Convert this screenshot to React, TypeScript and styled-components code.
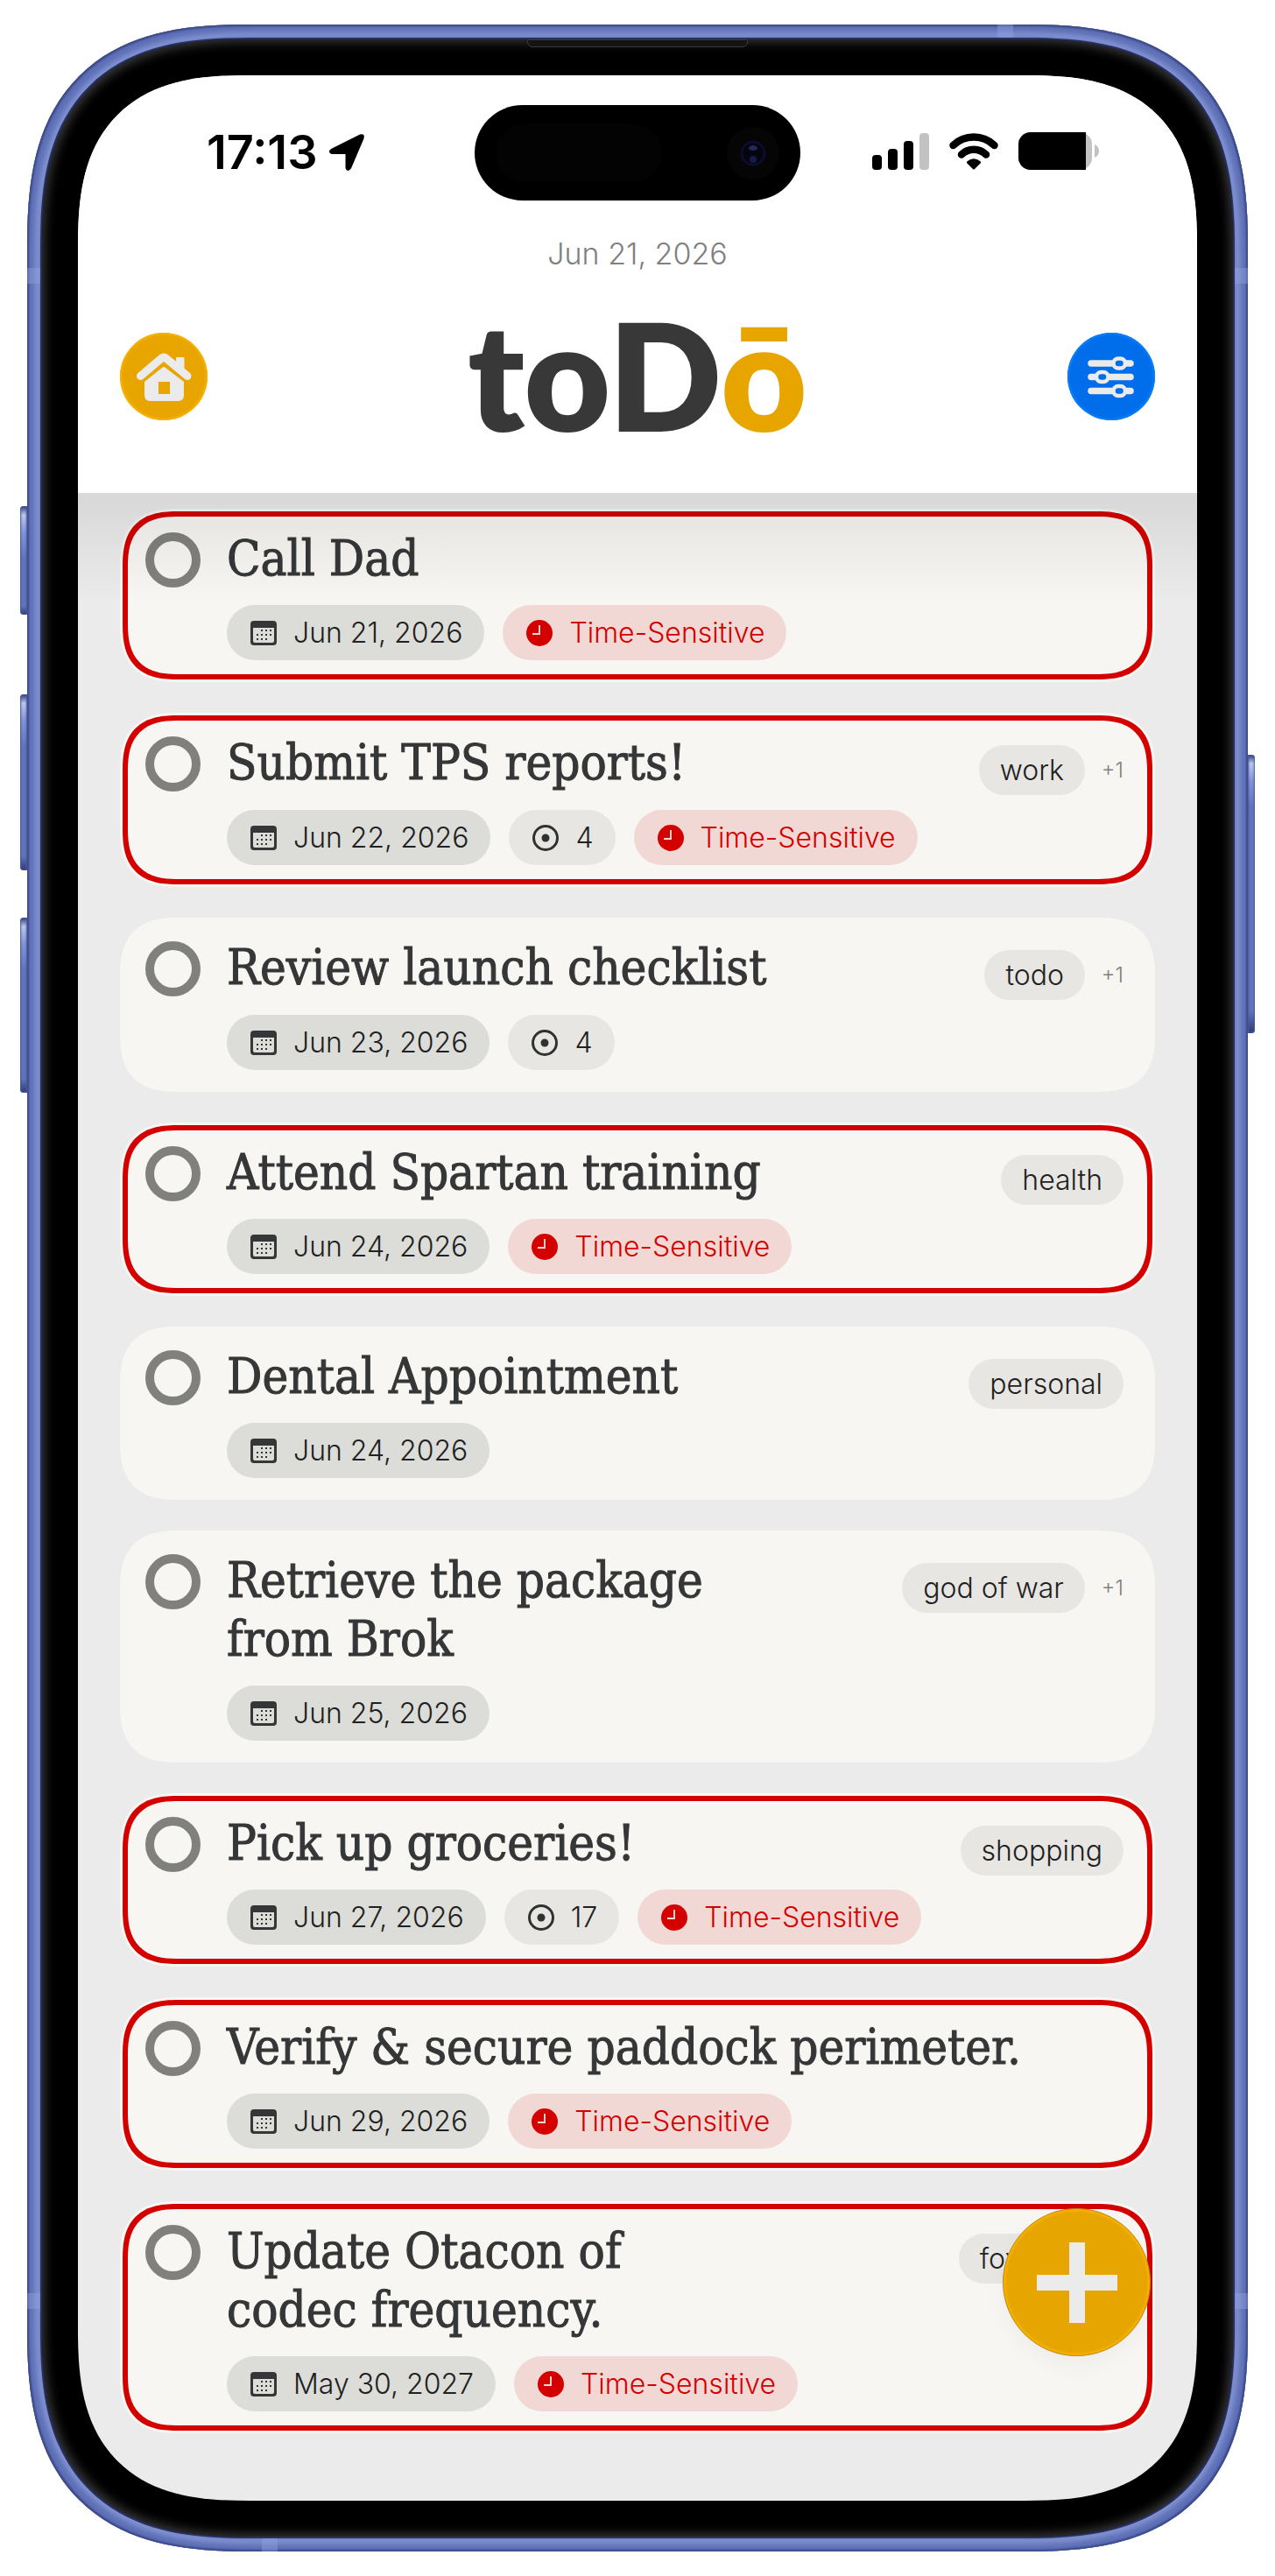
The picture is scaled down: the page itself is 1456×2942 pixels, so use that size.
import React from "react";
import styled, { createGlobalStyle, css } from "styled-components";

const BODY_FONT = `Inter, "Noto Sans", "Liberation Sans", sans-serif`;
const TITLE_FONT = `"DejaVu Serif Condensed", "DejaVu Serif", "Liberation Serif", serif`;
const LOGO_FONT = `Lato, "Open Sans", "Liberation Sans", sans-serif`;

const GlobalStyle = createGlobalStyle`
  *, *::before, *::after { box-sizing: border-box; }
  body { margin: 0; background: #ffffff; font-family: ${BODY_FONT}; color: #1f2122; }
`;

const smooth = (plain: number, wide: number) => css`
  border-radius: ${plain}px;
  @supports (corner-shape: squircle) {
    border-radius: ${wide}px;
    corner-shape: superellipse(1.4);
  }
`;

const Page = styled.div`
  padding: 28px 31px 29px;
`;

const Phone = styled.div`
  position: relative;
  padding: 17px;
  ${smooth(225, 256)}
  background: #5b6db8;
  box-shadow:
    inset 0 0 2px 2px #3d4a86,
    inset 0 0 6px 9px #5d6fb6,
    inset 0 0 5px 15px #8797d4;
`;

const Bezel = styled.div`
  position: relative;
  padding: 41px;
  ${smooth(208, 240)}
  background: #000000;
  box-shadow:
    0 0 0 2px #27305c,
    inset 0 0 12px 3px #383838;
`;

const Screen = styled.div`
  position: relative;
  overflow: hidden;
  ${smooth(166, 196)}
  background: #ebebeb;
`;

const SideButton = styled.span<{ $side: "left" | "right"; $top: number; $length: number }>`
  position: absolute;
  top: ${(p) => p.$top}px;
  ${(p) => p.$side}: -8px;
  width: 8px;
  height: ${(p) => p.$length}px;
  border-radius: ${(p) => (p.$side === "left" ? "4px 0 0 4px" : "0 4px 4px 0")};
  background: linear-gradient(#2f3a70, #b9c7f0 10px, #8494d6 30px, #6174bb 60px, #6174bb 92%, #2f3a70);
  box-shadow: inset 0 0 2px 1px #4a5a9e;
`;

const Antenna = styled.span<{ $edge: "left" | "right" | "top" | "bottom"; $at: string }>`
  position: absolute;
  background: rgba(150, 166, 228, 0.4);
  ${(p) => {
    const [side, offset] = p.$at.split(" ");
    const vertical = p.$edge === "left" || p.$edge === "right";
    return css`
      ${p.$edge}: 0;
      ${side}: ${offset};
      width: ${vertical ? 15 : 18}px;
      height: ${vertical ? 18 : 15}px;
    `;
  }}
`;

const Earpiece = styled.span`
  position: absolute;
  top: 0;
  left: 50%;
  width: 252px;
  height: 9px;
  transform: translateX(-50%);
  border: 1px solid #3a3a3a;
  border-radius: 0 0 6px 6px;
  background: #141414;
`;

const Header = styled.header`
  padding: 34px 48px 73px;
  background: #ffffff;
`;

const StatusBar = styled.div`
  display: grid;
  grid-template-columns: 1fr 372px 1fr;
  align-items: center;
  margin: 0 -48px;
`;

const Clock = styled.div`
  display: flex;
  align-items: center;
  gap: 12px;
  padding: 0 0 2px 147px;
  color: #000000;
  font-size: 54px;
  font-weight: 600;
  line-height: 60px;
`;

const Island = styled.div`
  display: flex;
  align-items: center;
  justify-content: space-between;
  height: 109px;
  padding: 0 24px;
  border-radius: 55px;
  background: #000000;
`;

const Sensor = styled.span`
  width: 190px;
  height: 66px;
  border-radius: 33px;
  background: #030303;
`;

const Camera = styled.span`
  display: grid;
  place-items: center;
  width: 60px;
  height: 60px;
  border-radius: 50%;
  background: #050506;
`;

const Signals = styled.div`
  display: flex;
  align-items: center;
  gap: 23px;
  padding: 0 0 3px 82px;
`;

const Today = styled.time`
  display: block;
  margin-top: 41px;
  color: #808080;
  font-size: 34px;
  font-weight: 300;
  line-height: 40px;
  text-align: center;
`;

const Brand = styled.div`
  display: flex;
  align-items: center;
  justify-content: space-between;
  height: 120px;
  margin-top: 60px;
`;

const RoundButton = styled.button<{ $color: string; $rim: string }>`
  width: 100px;
  height: 100px;
  padding: 0;
  border: 0;
  border-radius: 50%;
  background: ${(p) => p.$color};
  box-shadow: inset 0 0 2px 2px ${(p) => p.$rim};
  cursor: pointer;

  svg { display: block; }
`;

const Logo = styled.h1`
  margin: 0;
  padding-bottom: 7px;
  color: #383838;
  font-family: ${LOGO_FONT};
  font-size: 170px;
  font-weight: 800;
  line-height: 120px;

  em { color: #e8a500; font-style: normal; }
`;

const TaskArea = styled.main`
  position: relative;
  padding: 18px 48px 77px;

  &::before {
    content: "";
    position: absolute;
    z-index: 1;
    inset: 0 0 auto;
    height: 124px;
    background: linear-gradient(rgba(0, 0, 0, 0.08), rgba(0, 0, 0, 0.07) 20px, rgba(0, 0, 0, 0));
    pointer-events: none;
  }
`;

const TaskList = styled.ul`
  display: flex;
  flex-direction: column;
  gap: 35px;
  margin: 0;
  padding: 0;
  list-style: none;
`;

const Card = styled.li<{ $urgent: boolean }>`
  position: relative;
  display: grid;
  grid-template-columns: 63px 1fr;
  column-gap: 30px;
  padding: 23px 36px 25px 29px;
  ${smooth(56, 68)}
  background: #f7f6f2;

  ${(p) =>
    p.$urgent &&
    css`
      &::after {
        content: "";
        position: absolute;
        inset: 3px;
        border: 6px solid #d40000;
        ${smooth(52, 64)}
        pointer-events: none;
      }
    `}
`;

const Tick = styled.input`
  appearance: none;
  width: 63px;
  height: 63px;
  margin: 4px 0 0;
  border: 10px solid #80807e;
  border-radius: 50%;
  cursor: pointer;

  &:checked { background: #80807e; }
`;

const TaskBody = styled.div`
  display: flex;
  flex-direction: column;
  gap: 20px;
`;

const TitleRow = styled.div<{ $more: boolean }>`
  display: flex;
  align-items: flex-start;
  justify-content: space-between;
  min-height: ${(p) => (p.$more ? 68 : 67)}px;
`;

const Title = styled.label`
  color: #353637;
  font-family: ${TITLE_FONT};
  font-size: 56px;
  line-height: 67px;
  -webkit-text-stroke: 1px #353637;
  white-space: pre-line;
`;

const Tags = styled.div`
  display: flex;
  align-items: center;
  gap: 19px;
  height: 57px;
  margin: 14px 0 -4px;
`;

const Tag = styled.span`
  padding: 0 24px;
  border-radius: 29px;
  background: #e7e6e3;
  font-size: 32px;
  font-weight: 300;
  line-height: 57px;
`;

const More = styled.span`
  color: #808080;
  font-size: 24px;
  font-weight: 300;
`;

const Pills = styled.div`
  display: flex;
  gap: 21px;
`;

const Pill = styled.span<{ $tone: "date" | "count" | "urgent" }>`
  display: flex;
  align-items: center;
  gap: 19px;
  height: 63px;
  padding: 0 25px 0 27px;
  border-radius: 32px;
  background: ${(p) => ({ date: "#dcddd8", count: "#e7e6e3", urgent: "#f2d8d5" })[p.$tone]};
  color: ${(p) => (p.$tone === "urgent" ? "#d40000" : "#1f2122")};
  font-size: 32px;
  font-weight: 300;
  line-height: 40px;
`;

const AddButton = styled.button`
  position: absolute;
  z-index: 2;
  right: 53px;
  bottom: 165px;
  width: 169px;
  height: 169px;
  padding: 0;
  border: 1px solid #b98a1a;
  border-radius: 50%;
  background: #e6a500;
  box-shadow:
    inset 0 0 3px 2px #fdb400,
    0 10px 24px rgba(0, 0, 0, 0.04);
  cursor: pointer;

  svg { display: block; margin: 0 auto; }
`;

const ArrowIcon = () => (
  <svg width="42" height="44" viewBox="0 0 42 44" aria-hidden="true">
    <path d="M3.500 19 L36.500 2.500 Q41 1 39.500 6 L25 40 Q22 44 20.500 40 V23 H4 Q0 21.500 3.500 19Z" fill="#000" stroke="#000" strokeWidth="2" strokeLinejoin="round" />
  </svg>
);

const CameraLens = () => (
  <svg width="34" height="34" viewBox="0 0 34 34" aria-hidden="true">
    <circle cx="17" cy="17" r="13" fill="#050510" stroke="#0c0c2c" strokeWidth="3" />
    <ellipse cx="17" cy="11" rx="5" ry="3" fill="#23285f" />
    <circle cx="17" cy="24" r="4" fill="#171b48" />
  </svg>
);

const CellularIcon = () => (
  <svg width="65" height="42" viewBox="0 0 65 42" aria-hidden="true">
    <rect x="0" y="25" width="11" height="17" rx="4" />
    <rect x="18" y="18" width="11" height="24" rx="4" />
    <rect x="36" y="9" width="11" height="33" rx="4" />
    <rect x="54" y="0" width="11" height="42" rx="4" fill="#c2c2c2" />
  </svg>
);

const WifiIcon = () => (
  <svg width="56" height="42" viewBox="0 0 56 42" fill="none" stroke="#000" strokeLinecap="round" aria-hidden="true">
    <path d="M4.500 14 A34 34 0 0 1 51.500 14" strokeWidth="8.500" />
    <path d="M14 24.500 A20 20 0 0 1 42 24.500" strokeWidth="8.500" />
    <path d="M28 40 L21.500 33.500 Q28 28 34.500 33.500 Z" fill="#000" strokeWidth="3" strokeLinejoin="round" />
  </svg>
);

const BatteryIcon = () => (
  <svg width="93" height="44" viewBox="0 0 93 44" aria-hidden="true">
    <rect x="0" y="0" width="84" height="43" rx="14" fill="#c2c2c2" />
    <path d="M14 0 H77 V43 H14 A14 14 0 0 1 0 29 V14 A14 14 0 0 1 14 0Z" />
    <path d="M87 14 Q92 16 92 21.500 Q92 27 87 29Z" fill="#c2c2c2" />
  </svg>
);

const HomeIcon = () => (
  <svg width="100" height="100" viewBox="0 0 100 100" aria-hidden="true">
    <path d="M23.500 49.500 L47 29.500 Q50 27 53 29.500 L77 49.500" fill="none" stroke="#ebebeb" strokeWidth="9" strokeLinecap="round" />
    <path d="M64 29 Q64 28 65 28 H72.500 Q73.500 28 73.500 29 V46 L64 38Z" fill="#ebebeb" />
    <path d="M28 56 L48 40 Q50 38 52 40 L73 56 V71.500 Q73 78 66.500 78 H34.500 Q28 78 28 71.500Z M44 56 V70 H57 V56Z" fill="#ebebeb" fillRule="evenodd" />
  </svg>
);

const SlidersIcon = () => (
  <svg width="100" height="100" viewBox="0 0 100 100" aria-hidden="true">
    <g stroke="#ebebeb" strokeWidth="7.500" strokeLinecap="round">
      <path d="M27 35 H72 M27 50.500 H72 M27 66.500 H72" />
    </g>
    <g fill="#006dea" stroke="#ebebeb" strokeWidth="4.500">
      <rect x="52.500" y="29.500" width="13.500" height="11" rx="5.500" />
      <rect x="33" y="45" width="13.500" height="11" rx="5.500" />
      <rect x="52.500" y="61" width="13.500" height="11" rx="5.500" />
    </g>
  </svg>
);

const dots = [
  [12, 12], [17, 12], [22, 12],
  [7, 17], [12, 17], [17, 17], [22, 17],
  [7, 22], [12, 22], [17, 22],
];

const CalendarIcon = () => (
  <svg width="30" height="30" viewBox="0 0 30 30" aria-hidden="true">
    <path d="M4 1 H26 Q30 1 30 5 V25 Q30 29 26 29 H4 Q0 29 0 25 V5 Q0 1 4 1Z M3 9 V24 Q3 26 5 26 H25 Q27 26 27 24 V9Z" fill="#353637" fillRule="evenodd" />
    {dots.map(([x, y]) => (
      <rect key={`${x}-${y}`} x={x} y={y - 1} width="2" height="2" fill="#353637" />
    ))}
  </svg>
);

const TargetIcon = () => (
  <svg width="30" height="30" viewBox="0 0 30 30" aria-hidden="true">
    <circle cx="15" cy="15" r="13.500" fill="none" stroke="#303132" strokeWidth="3" />
    <circle cx="15" cy="15" r="4.500" fill="#303132" />
  </svg>
);

const ClockIcon = () => (
  <svg width="30" height="30" viewBox="0 0 30 30" aria-hidden="true">
    <circle cx="15" cy="15" r="15" fill="#d40000" />
    <path d="M15 6 V16 H7" fill="none" stroke="#f2d8d5" strokeWidth="2" />
  </svg>
);

const PlusIcon = () => (
  <svg width="92" height="92" viewBox="0 0 92 92" aria-hidden="true">
    <path d="M37 0 H55 V37 H92 V55 H55 V92 H37 V55 H0 V37 H37Z" fill="#ebebeb" />
  </svg>
);

interface Task {
  title: string;
  due: string;
  count?: number;
  urgent?: boolean;
  tag?: string;
  more?: number;
}

const tasks: Task[] = [
  { title: "Call Dad", due: "Jun 21, 2026", urgent: true },
  { title: "Submit TPS reports!", due: "Jun 22, 2026", count: 4, urgent: true, tag: "work", more: 1 },
  { title: "Review launch checklist", due: "Jun 23, 2026", count: 4, tag: "todo", more: 1 },
  { title: "Attend Spartan training", due: "Jun 24, 2026", urgent: true, tag: "health" },
  { title: "Dental Appointment", due: "Jun 24, 2026", tag: "personal" },
  { title: "Retrieve the package\nfrom Brok", due: "Jun 25, 2026", tag: "god of war", more: 1 },
  { title: "Pick up groceries!", due: "Jun 27, 2026", count: 17, urgent: true, tag: "shopping" },
  { title: "Verify & secure paddock perimeter.", due: "Jun 29, 2026", urgent: true },
  { title: "Update Otacon of\ncodec frequency.", due: "May 30, 2027", urgent: true, tag: "foxhound" },
];

const TaskCard = ({ task, id }: { task: Task; id: string }) => (
  <Card $urgent={!!task.urgent}>
    <Tick type="checkbox" id={id} />
    <TaskBody>
      <TitleRow $more={!!task.more}>
        <Title htmlFor={id}>{task.title}</Title>
        {task.tag && (
          <Tags>
            <Tag>{task.tag}</Tag>
            {task.more && <More>+{task.more}</More>}
          </Tags>
        )}
      </TitleRow>
      <Pills>
        <Pill $tone="date"><CalendarIcon />{task.due}</Pill>
        {task.count && <Pill $tone="count"><TargetIcon />{task.count}</Pill>}
        {task.urgent && <Pill $tone="urgent"><ClockIcon />Time-Sensitive</Pill>}
      </Pills>
    </TaskBody>
  </Card>
);

export default function App() {
  return (
    <>
      <GlobalStyle />
      <Page>
        <Phone>
          <SideButton $side="left" $top={550} $length={124} />
          <SideButton $side="left" $top={765} $length={201} />
          <SideButton $side="left" $top={1020} $length={200} />
          <SideButton $side="right" $top={834} $length={318} />
          <Antenna $edge="left" $at="top 278px" />
          <Antenna $edge="right" $at="top 278px" />
          <Antenna $edge="top" $at="right 268px" />
          <Antenna $edge="left" $at="bottom 277px" />
          <Antenna $edge="right" $at="bottom 277px" />
          <Antenna $edge="bottom" $at="left 268px" />
          <Bezel>
            <Earpiece />
            <Screen>
              <Header>
                <StatusBar>
                  <Clock>17:13<ArrowIcon /></Clock>
                  <Island>
                    <Sensor />
                    <Camera><CameraLens /></Camera>
                  </Island>
                  <Signals>
                    <CellularIcon />
                    <WifiIcon />
                    <BatteryIcon />
                  </Signals>
                </StatusBar>
                <Today>Jun 21, 2026</Today>
                <Brand>
                  <RoundButton type="button" aria-label="Home" $color="#e8a500" $rim="#f8b400"><HomeIcon /></RoundButton>
                  <Logo>toD<em>ō</em></Logo>
                  <RoundButton type="button" aria-label="Filters" $color="#006dea" $rim="#0a80f8"><SlidersIcon /></RoundButton>
                </Brand>
              </Header>
              <TaskArea>
                <TaskList>
                  {tasks.map((task, index) => (
                    <TaskCard key={task.title} task={task} id={`task-${index}`} />
                  ))}
                </TaskList>
              </TaskArea>
              <AddButton type="button" aria-label="Add task"><PlusIcon /></AddButton>
            </Screen>
          </Bezel>
        </Phone>
      </Page>
    </>
  );
}
